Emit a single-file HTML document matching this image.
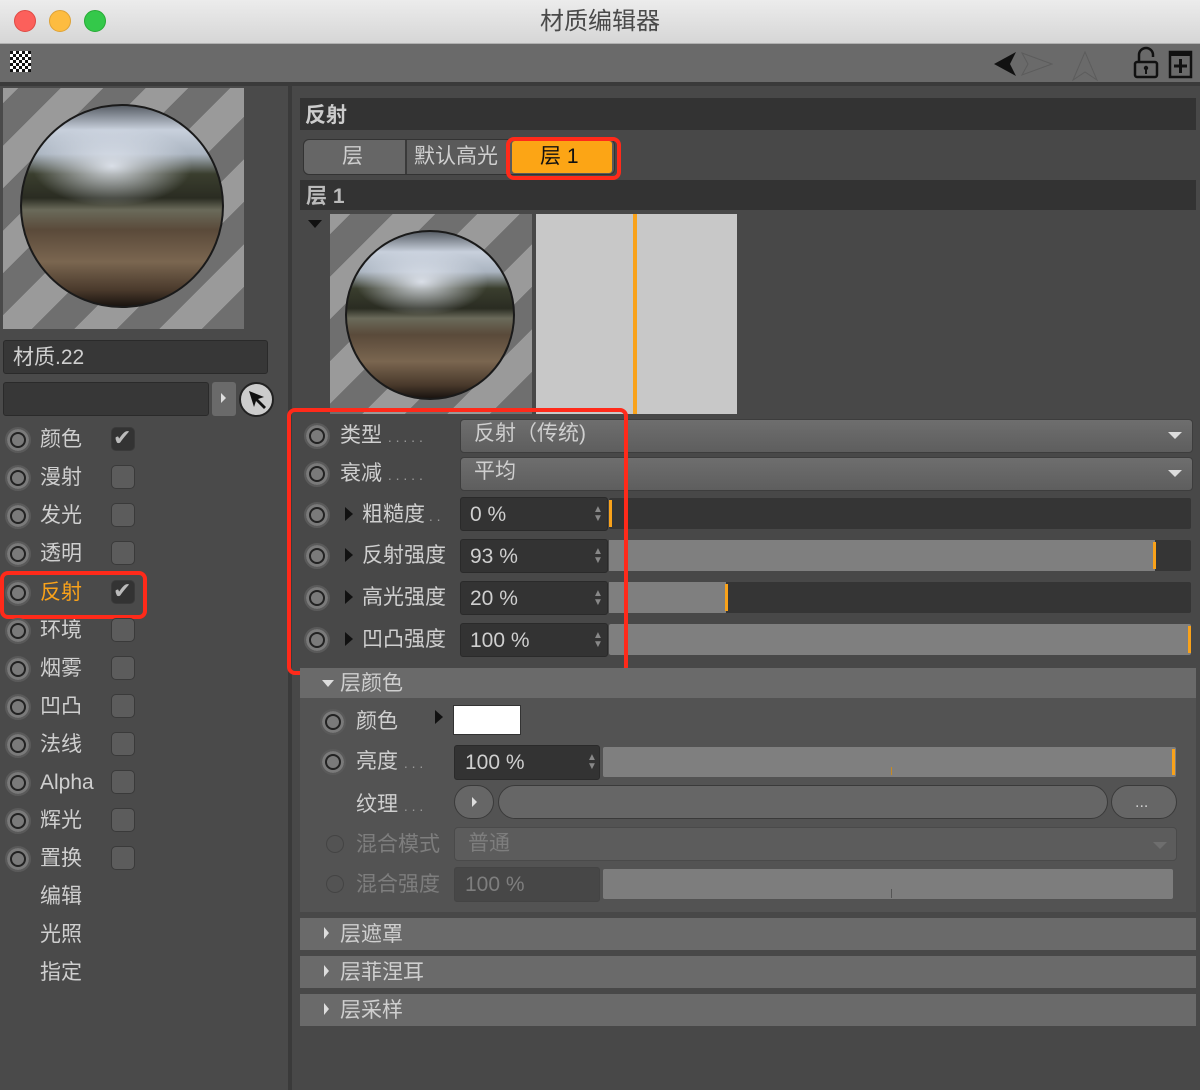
<!DOCTYPE html>
<html><head><meta charset="utf-8"><style>
*{box-sizing:border-box;margin:0;padding:0}
body{width:1200px;height:1090px;background:#484848;font-family:"Liberation Sans","Noto Sans CJK SC",sans-serif;color:#cfcfcf;position:relative;overflow:hidden}
.a{position:absolute}
.t{font-size:21px;line-height:1;white-space:nowrap}
.rad{position:absolute;width:26px;height:26px;border-radius:50%;background:#7a7a7a;border:2px solid #5a5a5a;box-shadow:inset 0 0 0 3px #7a7a7a, inset 0 0 0 5px #222}
.chk{position:absolute;width:24px;height:24px;border-radius:5px;background:#5c5c5c;border:1px solid #3a3a3a}
.tri{position:absolute;width:0;height:0;border-top:7px solid transparent;border-bottom:7px solid transparent;border-left:8px solid #111}
.fld{position:absolute;background:#333;border-radius:3px;border:1px solid #2a2a2a}
.bar{position:absolute;border-radius:2px}
.dd{position:absolute;background:linear-gradient(#6e6e6e,#5e5e5e);border-radius:4px;border:1px solid #3d3d3d}
.sph{position:absolute;border-radius:50%;border:2px solid #1a1a1a;background:
radial-gradient(ellipse 40% 20% at 45% 30%,rgba(230,235,245,.9),rgba(230,235,245,0)),
linear-gradient(#5a6068 0%,#c8d0dc 12%,#aab4c0 24%,#3a3e2e 34%,#2a2c22 46%,#6a6a5a 52%,#5a4a3a 62%,#7a6650 78%,#4a3a2c 92%,#1a1410 100%)}
.stripes{background:repeating-linear-gradient(-45deg,#6f6f6f 0 30px,#9a9a9a 30px 60px)}
.red{position:absolute;border:4px solid #ff2a1a;border-radius:8px}
.sec{position:absolute;left:300px;width:896px;background:#6a6a6a}
.ck{position:absolute;color:#bbb;font-size:22px;line-height:1}
</style></head><body>
<div class="a" style="left:0;top:0;width:1200px;height:44px;background:linear-gradient(#ececec,#d6d6d6);border-bottom:1px solid #b0b0b0"></div>
<div class="a" style="left:14px;top:10px;width:22px;height:22px;border-radius:50%;background:#fc605b;border:1px solid #de4a44"></div>
<div class="a" style="left:49px;top:10px;width:22px;height:22px;border-radius:50%;background:#fdbc40;border:1px solid #dea236"></div>
<div class="a" style="left:84px;top:10px;width:22px;height:22px;border-radius:50%;background:#34c84a;border:1px solid #27aa35"></div>
<div class="a t" style="left:0;width:1200px;top:10px;text-align:center;color:#4a4a4a;font-size:24px">材质编辑器</div>
<div class="a" style="left:0;top:44px;width:1200px;height:38px;background:#6a6a6a"></div>
<div class="a" style="left:0;top:82px;width:1200px;height:4px;background:#3a3a3a"></div>
<div class="a" style="left:10px;top:51px;width:21px;height:21px;background:repeating-conic-gradient(#fff 0 25%,#111 0 50%) 0 0/6px 6px"></div>
<svg class="a" style="left:990px;top:44px" width="210" height="38">
<path d="M4 20 L26 8 L20 20 L26 32 Z" fill="#111"/>
<path d="M32 9 L62 20 L32 31 L38 20 Z" fill="none" stroke="#5c5c5c"/>
<path d="M95 8 L83 36 L95 28 L107 36 Z" fill="none" stroke="#5c5c5c"/>
<rect x="145" y="18" width="22" height="15" rx="2" fill="none" stroke="#111" stroke-width="2.5"/>
<path d="M149 18 V11 a7 7 0 0 1 14 0 V13" fill="none" stroke="#111" stroke-width="2.5"/>
<circle cx="156" cy="24" r="2.2" fill="#111"/><rect x="155" y="24" width="2" height="6" fill="#111"/>
<rect x="180" y="8" width="21" height="25" fill="none" stroke="#111" stroke-width="2.5"/><rect x="180" y="8" width="21" height="4" fill="#111"/>
<path d="M190.5 15 V29 M184 22 H197" stroke="#111" stroke-width="3"/>
</svg>
<div class="a" style="left:0;top:86px;width:290px;height:1004px;background:#4a4a4a"></div>
<div class="a" style="left:288px;top:86px;width:4px;height:1004px;background:#3a3a3a"></div>
<div class="a stripes" style="left:3px;top:88px;width:241px;height:241px"></div>
<div class="sph" style="left:20px;top:104px;width:204px;height:204px"></div>
<div class="fld" style="left:3px;top:340px;width:265px;height:34px;background:#373737"></div>
<div class="a t" style="left:13px;top:347px;color:#cfcfcf">材质.22</div>
<div class="fld" style="left:3px;top:382px;width:206px;height:34px;background:#373737"></div>
<div class="a" style="left:212px;top:382px;width:24px;height:34px;background:#6a6a6a;border-radius:3px"></div>
<div class="tri" style="left:221px;top:393px;border-left-color:#ddd;border-top-width:5px;border-bottom-width:5px;border-left-width:5px"></div>
<div class="a" style="left:239px;top:382px;width:35px;height:35px;border-radius:50%;background:#ccc;border:2px solid #222"></div>
<svg class="a" style="left:246px;top:388px" width="24" height="24"><path d="M3 3 L18 9 L12 11 L20 19 L18 21 L10 13 L8 19 Z" fill="#111"/></svg>
<div class="rad" style="left:5px;top:427px"></div><div class="a t" style="left:40px;top:429px">颜色</div><div class="chk" style="left:111px;top:427px;background:#333"></div><div class="ck" style="left:113px;top:427px">✔</div>
<div class="rad" style="left:5px;top:465px"></div><div class="a t" style="left:40px;top:467px">漫射</div><div class="chk" style="left:111px;top:465px"></div>
<div class="rad" style="left:5px;top:503px"></div><div class="a t" style="left:40px;top:505px">发光</div><div class="chk" style="left:111px;top:503px"></div>
<div class="rad" style="left:5px;top:541px"></div><div class="a t" style="left:40px;top:543px">透明</div><div class="chk" style="left:111px;top:541px"></div>
<div class="rad" style="left:5px;top:580px"></div><div class="a t" style="left:40px;top:582px;color:#f9a21a">反射</div><div class="chk" style="left:111px;top:580px;background:#333"></div><div class="ck" style="left:113px;top:580px">✔</div>
<div class="red" style="left:0;top:571px;width:147px;height:48px"></div>
<div class="rad" style="left:5px;top:618px"></div><div class="a t" style="left:40px;top:620px">环境</div><div class="chk" style="left:111px;top:618px"></div>
<div class="rad" style="left:5px;top:656px"></div><div class="a t" style="left:40px;top:658px">烟雾</div><div class="chk" style="left:111px;top:656px"></div>
<div class="rad" style="left:5px;top:694px"></div><div class="a t" style="left:40px;top:696px">凹凸</div><div class="chk" style="left:111px;top:694px"></div>
<div class="rad" style="left:5px;top:732px"></div><div class="a t" style="left:40px;top:734px">法线</div><div class="chk" style="left:111px;top:732px"></div>
<div class="rad" style="left:5px;top:770px"></div><div class="a t" style="left:40px;top:772px">Alpha</div><div class="chk" style="left:111px;top:770px"></div>
<div class="rad" style="left:5px;top:808px"></div><div class="a t" style="left:40px;top:810px">辉光</div><div class="chk" style="left:111px;top:808px"></div>
<div class="rad" style="left:5px;top:846px"></div><div class="a t" style="left:40px;top:848px">置换</div><div class="chk" style="left:111px;top:846px"></div>
<div class="a t" style="left:40px;top:886px">编辑</div>
<div class="a t" style="left:40px;top:924px">光照</div>
<div class="a t" style="left:40px;top:962px">指定</div>
<div class="a" style="left:292px;top:86px;width:908px;height:1004px;background:#484848"></div>
<div class="a" style="left:300px;top:98px;width:896px;height:32px;background:#333"></div>
<div class="a t" style="left:305px;top:105px;font-weight:bold;color:#ccc">反射</div>
<div class="a" style="left:303px;top:139px;width:312px;height:36px;background:#5a5a5a;border-radius:6px;border:1px solid #333"></div>
<div class="a" style="left:405px;top:140px;width:2px;height:34px;background:#3a3a3a"></div>
<div class="a" style="left:304px;top:140px;width:101px;height:34px;background:#666;border-radius:6px 0 0 6px"></div>
<div class="a t" style="left:342px;top:146px">层</div>
<div class="a t" style="left:414px;top:146px">默认高光</div>
<div class="a" style="left:512px;top:141px;width:100px;height:32px;background:#fca515;border-radius:3px"></div>
<div class="a t" style="left:540px;top:146px;color:#111">层 1</div>
<div class="red" style="left:506px;top:137px;width:115px;height:43px"></div>
<div class="a" style="left:300px;top:180px;width:896px;height:30px;background:#333"></div>
<div class="a t" style="left:306px;top:186px;font-weight:bold;color:#bbb">层 1</div>
<div class="a" style="left:308px;top:220px;width:0;height:0;border-left:7px solid transparent;border-right:7px solid transparent;border-top:8px solid #111"></div>
<div class="a stripes" style="left:330px;top:214px;width:202px;height:200px"></div>
<div class="sph" style="left:345px;top:230px;width:170px;height:170px"></div>
<div class="a" style="left:536px;top:214px;width:201px;height:200px;background:#c8c8c8"></div>
<div class="a" style="left:633px;top:214px;width:4px;height:200px;background:#f9a21a"></div>
<div class="rad" style="left:304px;top:423px"></div><div class="a t" style="left:340px;top:425px">类型 <span style="font-size:14px;color:#999">. . . . .</span></div>
<div class="dd" style="left:460px;top:419px;width:733px;height:34px"></div><div class="a t" style="left:474px;top:423px">反射（传统)</div>
<div class="a" style="left:1168px;top:432px;border-left:7px solid transparent;border-right:7px solid transparent;border-top:7px solid #ddd"></div>
<div class="rad" style="left:304px;top:461px"></div><div class="a t" style="left:340px;top:463px">衰减 <span style="font-size:14px;color:#999">. . . . .</span></div>
<div class="dd" style="left:460px;top:457px;width:733px;height:34px"></div><div class="a t" style="left:474px;top:461px">平均</div>
<div class="a" style="left:1168px;top:470px;border-left:7px solid transparent;border-right:7px solid transparent;border-top:7px solid #ddd"></div>
<div class="rad" style="left:304px;top:502px"></div><div class="tri" style="left:345px;top:507px"></div><div class="a t" style="left:362px;top:504px">粗糙度<span style="font-size:14px;color:#999"> . .</span></div>
<div class="fld" style="left:460px;top:497px;width:148px;height:34px"></div><div class="a t" style="left:470px;top:504px">0 %</div><div class="a" style="left:593px;top:505px;color:#888;font-size:10px;line-height:9px">▲<br>▼</div>
<div class="bar" style="left:609px;top:498px;width:582px;height:31px;background:#353535"></div><div class="a" style="left:609px;top:500px;width:3px;height:27px;background:#f9a21a"></div>
<div class="rad" style="left:304px;top:543px"></div><div class="tri" style="left:345px;top:548px"></div><div class="a t" style="left:362px;top:545px">反射强度</div>
<div class="fld" style="left:460px;top:539px;width:148px;height:34px"></div><div class="a t" style="left:470px;top:546px">93 %</div><div class="a" style="left:593px;top:547px;color:#888;font-size:10px;line-height:9px">▲<br>▼</div>
<div class="bar" style="left:609px;top:540px;width:582px;height:31px;background:#353535"></div><div class="a" style="left:609px;top:540px;width:546px;height:31px;background:#7f7f7f"></div><div class="a" style="left:1153px;top:542px;width:3px;height:27px;background:#f9a21a"></div>
<div class="rad" style="left:304px;top:585px"></div><div class="tri" style="left:345px;top:590px"></div><div class="a t" style="left:362px;top:587px">高光强度</div>
<div class="fld" style="left:460px;top:581px;width:148px;height:34px"></div><div class="a t" style="left:470px;top:588px">20 %</div><div class="a" style="left:593px;top:589px;color:#888;font-size:10px;line-height:9px">▲<br>▼</div>
<div class="bar" style="left:609px;top:582px;width:582px;height:31px;background:#353535"></div><div class="a" style="left:609px;top:582px;width:117px;height:31px;background:#7f7f7f"></div><div class="a" style="left:725px;top:584px;width:3px;height:27px;background:#f9a21a"></div>
<div class="rad" style="left:304px;top:627px"></div><div class="tri" style="left:345px;top:632px"></div><div class="a t" style="left:362px;top:629px">凹凸强度</div>
<div class="fld" style="left:460px;top:623px;width:148px;height:34px"></div><div class="a t" style="left:470px;top:630px">100 %</div><div class="a" style="left:593px;top:631px;color:#888;font-size:10px;line-height:9px">▲<br>▼</div>
<div class="bar" style="left:609px;top:624px;width:582px;height:31px;background:#7f7f7f"></div><div class="a" style="left:1188px;top:626px;width:3px;height:27px;background:#f9a21a"></div>
<div class="red" style="left:287px;top:408px;width:341px;height:267px"></div>
<div class="a" style="left:300px;top:668px;width:896px;height:244px;background:#535353"></div>
<div class="sec" style="top:668px;height:30px"></div>
<div class="a" style="left:322px;top:680px;border-left:6px solid transparent;border-right:6px solid transparent;border-top:7px solid #ddd"></div>
<div class="a t" style="left:340px;top:673px">层颜色</div>
<div class="rad" style="left:320px;top:709px"></div><div class="a t" style="left:356px;top:711px">颜色</div>
<div class="tri" style="left:435px;top:710px"></div>
<div class="a" style="left:453px;top:705px;width:68px;height:30px;background:#fff;border:1px solid #333"></div>
<div class="rad" style="left:320px;top:749px"></div><div class="a t" style="left:356px;top:751px">亮度 <span style="font-size:14px;color:#999">. . .</span></div>
<div class="fld" style="left:454px;top:745px;width:146px;height:35px"></div><div class="a t" style="left:465px;top:752px">100 %</div><div class="a" style="left:587px;top:753px;color:#888;font-size:10px;line-height:9px">▲<br>▼</div>
<div class="bar" style="left:603px;top:747px;width:573px;height:30px;background:#7f7f7f"></div><div class="a" style="left:1172px;top:749px;width:3px;height:26px;background:#f9a21a"></div>
<div class="a" style="left:891px;top:767px;width:1px;height:8px;background:#c88a20"></div>
<div class="a t" style="left:356px;top:794px">纹理 <span style="font-size:14px;color:#999">. . .</span></div>
<div class="a" style="left:454px;top:785px;width:40px;height:34px;border-radius:17px;background:#666;border:1px solid #3a3a3a"></div>
<div class="tri" style="left:472px;top:797px;border-left-color:#ddd;border-top-width:5px;border-bottom-width:5px;border-left-width:5px"></div>
<div class="a" style="left:498px;top:785px;width:610px;height:34px;border-radius:17px;background:#666;border:1px solid #3a3a3a"></div>
<div class="a" style="left:1111px;top:785px;width:66px;height:34px;border-radius:17px;background:#666;border:1px solid #3a3a3a"></div>
<div class="a t" style="left:1135px;top:795px;font-size:16px">...</div>
<div class="a" style="left:326px;top:835px;width:18px;height:18px;border-radius:50%;border:1px solid #444"></div><div class="a t" style="left:356px;top:834px;color:#7e7e7e">混合模式</div>
<div class="dd" style="left:454px;top:827px;width:723px;height:34px;background:#5c5c5c;border-color:#4a4a4a"></div><div class="a t" style="left:468px;top:833px;color:#7e7e7e">普通</div>
<div class="a" style="left:1153px;top:842px;border-left:7px solid transparent;border-right:7px solid transparent;border-top:7px solid #6e6e6e"></div>
<div class="a" style="left:326px;top:875px;width:18px;height:18px;border-radius:50%;border:1px solid #444"></div><div class="a t" style="left:356px;top:874px;color:#7e7e7e">混合强度</div>
<div class="fld" style="left:454px;top:867px;width:146px;height:35px;background:#474747;border-color:#444"></div><div class="a t" style="left:465px;top:874px;color:#7e7e7e">100 %</div>
<div class="bar" style="left:603px;top:869px;width:570px;height:30px;background:#7d7d7d"></div>
<div class="a" style="left:891px;top:889px;width:1px;height:9px;background:#555"></div>
<div class="sec" style="top:918px;height:32px"></div><div class="tri" style="left:324px;top:927px;border-left-color:#ddd;border-top-width:6px;border-bottom-width:6px;border-left-width:5px"></div><div class="a t" style="left:340px;top:924px">层遮罩</div>
<div class="sec" style="top:956px;height:32px"></div><div class="tri" style="left:324px;top:965px;border-left-color:#ddd;border-top-width:6px;border-bottom-width:6px;border-left-width:5px"></div><div class="a t" style="left:340px;top:962px">层菲涅耳</div>
<div class="sec" style="top:994px;height:32px"></div><div class="tri" style="left:324px;top:1003px;border-left-color:#ddd;border-top-width:6px;border-bottom-width:6px;border-left-width:5px"></div><div class="a t" style="left:340px;top:1000px">层采样</div>
</body></html>
